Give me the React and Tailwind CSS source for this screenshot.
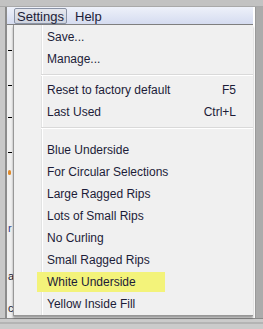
import React from 'react';

const font = { fontFamily: '"Liberation Sans", Arial, sans-serif' };

const Row = ({ label, shortcut }) => (
  <div className="relative z-10 flex h-[22px] items-center justify-between pl-[33px] pr-[17px]">
    <span>{label}</span>
    {shortcut && <span>{shortcut}</span>}
  </div>
);

const Separator = ({ h }) => (
  <div className={`relative z-10 ${h} pl-[27px] pt-[4px]`}>
    <div className="border-t border-[#d9d9d9]" />
    <div className="border-t border-white" />
  </div>
);

export default function App() {
  const presets = [
    'Blue Underside',
    'For Circular Selections',
    'Large Ragged Rips',
    'Lots of Small Rips',
    'No Curling',
    'Small Ragged Rips',
  ];

  return (
    <div className="flex h-[329px] w-[263px] flex-col bg-[#c4c4c4] text-[12px] text-[#1c1c38]" style={font}>
      {/* top frame */}
      <div className="h-[7px] border-b border-[#a9a9a9] bg-[#c2c2c2]" />

      <div className="flex flex-1">
        <div className="w-[5px] bg-[#c8c8c8]" />
        <div className="w-[2px] bg-[#8c8c8c]" />

        {/* window */}
        <div className="relative flex flex-1 flex-col">
          {/* menubar */}
          <div className="flex h-[18px] items-start border-b border-[#7f7f7f] bg-gradient-to-b from-[#eef1fa] to-[#d5dcf0]">
            <div className="ml-[7px] mt-[1px] flex h-[16px] w-[53px] items-center justify-center rounded-[2px] border border-[#8a93a6] bg-gradient-to-b from-[#e6e8ee] to-[#cfd4df] text-[13px] leading-none">
              Settings
            </div>
            <div className="ml-[8px] mt-[1px] flex h-[16px] items-center text-[13px] leading-none">Help</div>
          </div>

          {/* window content behind the menu */}
          <div className="flex flex-1 flex-col bg-[#efefef] pl-[1px] pt-[25px] text-[11px] text-[#223]">
            <div className="h-[1px] w-[4px] bg-black" />
            <div className="mt-[34px] h-[1px] w-[4px] bg-black" />
            <div className="mt-[31px] h-[1px] w-[4px] bg-black" />
            <div className="mt-[34px] h-[1px] w-[4px] bg-black" />
            <div className="mt-[17px] h-[5px] w-[3px] rounded-full bg-[#e08a2a]" />
            <div className="mt-[48px] h-[12px] leading-none text-[#33408a]">r</div>
            <div className="mt-[36px] h-[12px] leading-none">a</div>
            <div className="mt-[20px] h-[12px] leading-none">c</div>
          </div>

          {/* dropdown menu */}
          <div className="absolute left-[6px] top-[18px] h-[291px] w-[240px] border-b border-l border-[#979797] bg-[#f0f0f0] pt-[1px] shadow-[0_2px_2px_rgba(0,0,0,0.35)]">
            <div className="absolute bottom-0 left-[27px] top-0 w-[2px] border-l border-r border-l-[#e2e3e3] border-r-white" />
            <Row label="Save..." />
            <Row label="Manage..." />
            <Separator h="h-[9px]" />
            <Row label="Reset to factory default" shortcut="F5" />
            <Row label="Last Used" shortcut="Ctrl+L" />
            <Separator h="h-[16px]" />
            {presets.map((p) => (
              <Row key={p} label={p} />
            ))}
            <div className="relative z-10 flex h-[22px] items-center">
              <div className="ml-[23px] flex h-[20px] w-[128px] items-center bg-[#f3f37a] pl-[10px]">
                White Underside
              </div>
            </div>
            <Row label="Yellow Inside Fill" />
          </div>
        </div>

        <div className="w-[2px] bg-white" />
        <div className="w-[8px] border-l border-[#9a9a9a] bg-[#ababab]" />
      </div>

      {/* bottom frame */}
      <div className="h-[11px] border-t border-[#8a8a8a] bg-[#cbcbcb]">
        <div className="mt-[3px] h-[2px] bg-[#b4b4b4]" />
      </div>
    </div>
  );
}
